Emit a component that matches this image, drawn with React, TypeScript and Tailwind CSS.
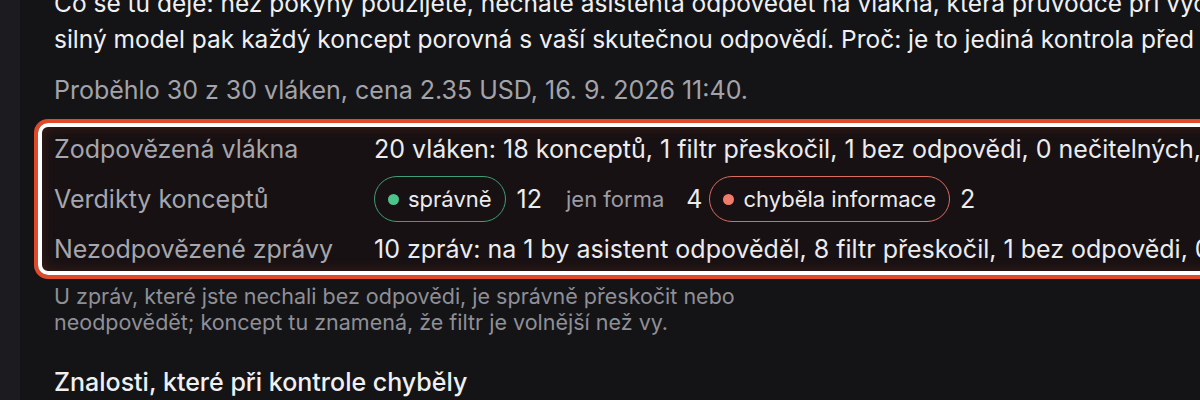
import React from "react";

function Dot({ color }: { color: string }) {
  return <span className={`inline-block h-[11px] w-[11px] rounded-full ${color}`} />;
}

export default function App() {
  return (
    <div
      className="flex h-[400px] w-[1200px] overflow-hidden bg-[#141417] text-[#ececee]"
      style={{ fontFamily: "Inter, 'Noto Sans', sans-serif" }}
    >
      <div className="w-5 shrink-0 bg-[#1c1b20]" />
      <div className="w-[1500px] shrink-0 pl-[14px]">
        <div className="mt-[-15px] pl-5 text-[24.5px] leading-[36px] text-[#f0f0f2]">
          <div className="whitespace-nowrap">
            Co se tu děje: než pokyny použijete, necháte asistenta odpovědět na vlákna, která průvodce při výchozím nastavení vybral, a
          </div>
          <div className="whitespace-nowrap">
            silný model pak každý koncept porovná s vaší skutečnou odpovědí. Proč: je to jediná kontrola před ostrým nasazením.
          </div>
        </div>
        <div className="mt-[15px] whitespace-nowrap pl-5 text-[25px] leading-[36px] text-[#a3a3a9]">
          Proběhlo 30 z 30 vláken, cena 2.35 USD, 16. 9. 2026 11:40.
        </div>
        <div className="mt-[11px] rounded-[14px] border-4 border-[#e04a2b]">
          <div className="rounded-[10px] border-4 border-white bg-[#171113] shadow-[inset_0_0_14px_rgba(224,74,43,0.2)]">
            <div className="grid grid-cols-[320px_1fr] items-center gap-y-[11px] pb-[6px] pl-3 pt-[6px] text-[25px] leading-[32px]">
              <div className="whitespace-nowrap text-[#a6a6ad]">Zodpovězená vlákna</div>
              <div className="whitespace-nowrap">
                20 vláken: 18 konceptů, 1 filtr přeskočil, 1 bez odpovědi, 0 nečitelných, 0 chyb
              </div>
              <div className="whitespace-nowrap text-[#a6a6ad]">Verdikty konceptů</div>
              <div className="flex items-center whitespace-nowrap">
                <span className="flex h-[46px] items-center gap-[9px] rounded-full border-[1.5px] border-[#3f9e73] px-[13px] text-[22px] text-[#ececee]">
                  <Dot color="bg-[#4cc38a]" />
                  správně
                </span>
                <span className="ml-[11px]">12</span>
                <span className="ml-[10px] flex h-[46px] items-center px-[14px] text-[22px] text-[#9d9da3]">
                  jen forma
                </span>
                <span className="ml-[8px]">4</span>
                <span className="ml-[7px] flex h-[46px] items-center gap-[9px] rounded-full border-[1.5px] border-[#d86d5e] px-[13px] text-[22px] text-[#ececee]">
                  <Dot color="bg-[#f07b6b]" />
                  chyběla informace
                </span>
                <span className="ml-[10px]">2</span>
              </div>
              <div className="whitespace-nowrap text-[#a6a6ad]">Nezodpovězené zprávy</div>
              <div className="whitespace-nowrap">
                10 zpráv: na 1 by asistent odpověděl, 8 filtr přeskočil, 1 bez odpovědi, 0 nečitelných
              </div>
            </div>
          </div>
        </div>
        <div className="mt-[4px] pl-5 text-[21.5px] leading-[26px] text-[#8f8f96]">
          <div className="whitespace-nowrap">U zpráv, které jste nechali bez odpovědi, je správně přeskočit nebo</div>
          <div className="whitespace-nowrap">neodpovědět; koncept tu znamená, že filtr je volnější než vy.</div>
        </div>
        <div className="mt-[32px] pl-5 text-[25px] font-medium leading-[30px] text-[#f0f0f2]">
          Znalosti, které při kontrole chyběly
        </div>
      </div>
    </div>
  );
}
